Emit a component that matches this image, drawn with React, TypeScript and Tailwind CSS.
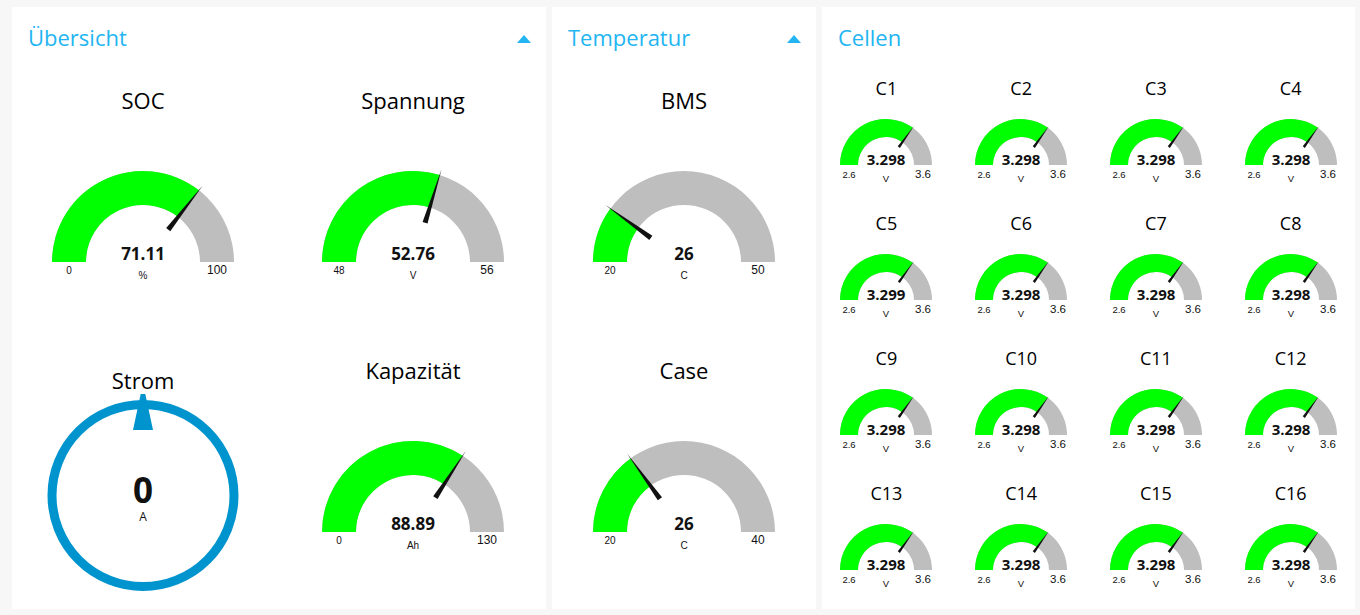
import React from 'react';

const GREEN = '#00ff00';
const GRAY = '#bebebe';
const BLUE = '#0094ce';

interface GaugeSpec {
  w: number;
  h: number;
  cy: number;
  ro: number;
  ri: number;
  top: number;
  bottom: number;
  half: number;
  valueSize: number;
  valueY: number;
  minSize: number;
  maxSize: number;
  labelY: number;
  labelOffset: number;
  unitSize: number;
  unitY: number;
}

const BIG: GaugeSpec = {
  w: 240, h: 130, cy: 105, ro: 91, ri: 57, top: 6, bottom: 16, half: 2.6,
  valueSize: 17, valueY: -2, minSize: 10, maxSize: 12, labelY: 12, labelOffset: 74, unitSize: 10, unitY: 17,
};

const SMALL: GaugeSpec = {
  w: 120, h: 70, cy: 52, ro: 46, ri: 28, top: 2, bottom: 6, half: 1.3,
  valueSize: 15, valueY: 0, minSize: 9.5, maxSize: 11.5, labelY: 13, labelOffset: 37, unitSize: 9.5, unitY: 17,
};

const arcPath = (cx: number, cy: number, ro: number, ri: number, f: number) => {
  const a = (1 - f) * Math.PI;
  const xo = cx + ro * Math.cos(a);
  const yo = cy - ro * Math.sin(a);
  const xi = cx + ri * Math.cos(a);
  const yi = cy - ri * Math.sin(a);
  return `M${cx - ro},${cy} A${ro},${ro} 0 0 1 ${xo},${yo} L${xi},${yi} A${ri},${ri} 0 0 0 ${cx - ri},${cy} Z`;
};

const needlePath = (cx: number, cy: number, s: GaugeSpec, f: number) => {
  const a = (1 - f) * Math.PI;
  const xc = cx + (s.ro + s.top) * Math.cos(a);
  const yc = cy - (s.ro + s.top) * Math.sin(a);
  const xz = cx + (s.ri - s.bottom) * Math.cos(a);
  const yz = cy - (s.ri - s.bottom) * Math.sin(a);
  const xa = xz + s.half * Math.sin(a);
  const ya = yz + s.half * Math.cos(a);
  const xb = xz - s.half * Math.sin(a);
  const yb = yz - s.half * Math.cos(a);
  return `M${xa},${ya} L${xb},${yb} L${xc},${yc} Z`;
};

interface GaugeProps {
  spec: GaugeSpec;
  value: string;
  min: number;
  max: number;
  unit: string;
}

const Gauge: React.FC<GaugeProps> = ({ spec, value, min, max, unit }) => {
  const cx = spec.w / 2;
  const cy = spec.cy;
  const f = Math.min(1, Math.max(0, (parseFloat(value) - min) / (max - min)));
  return (
    <svg width={spec.w} height={spec.h} viewBox={`0 0 ${spec.w} ${spec.h}`}>
      <path d={arcPath(cx, cy, spec.ro, spec.ri, 1)} fill={GRAY} />
      <path d={arcPath(cx, cy, spec.ro, spec.ri, f)} fill={GREEN} />
      <path d={needlePath(cx, cy, spec, f)} fill="#111111" />
      <text x={cx} y={cy + spec.valueY} textAnchor="middle" fontFamily="'Open Sans', sans-serif" fontWeight={700} fontSize={spec.valueSize} fill="#111111">
        {value}
      </text>
      <text x={cx - spec.labelOffset} y={cy + spec.labelY} textAnchor="middle" fontFamily="'Liberation Sans', Arial, sans-serif" fontSize={spec.minSize} fill="#111111">
        {min}
      </text>
      <text x={cx + spec.labelOffset} y={cy + spec.labelY} textAnchor="middle" fontFamily="'Liberation Sans', Arial, sans-serif" fontSize={spec.maxSize} fill="#111111">
        {max}
      </text>
      <text x={cx} y={cy + spec.unitY} textAnchor="middle" fontFamily="'Liberation Sans', Arial, sans-serif" fontSize={spec.unitSize} fill="#111111">
        {unit}
      </text>
    </svg>
  );
};

const GroupHeader: React.FC<{ title: string; caret?: boolean }> = ({ title, caret }) => (
  <div className="flex h-[62px] items-center justify-between pb-[3px] pl-[16px] pr-[15px]">
    <h2 className="text-[22px] leading-none text-[#22b5f1]">{title}</h2>
    {caret && (
      <svg width="14" height="8" viewBox="0 0 14 8" className="mt-[4px]">
        <polygon points="7,0 14,8 0,8" fill="#22b5f1" />
      </svg>
    )}
  </div>
);

const BigGauge: React.FC<{ title: string; value: string; min: number; max: number; unit: string }> = (props) => (
  <div className="flex h-[270px] flex-col items-center">
    <p className="pt-[18px] text-[22px] leading-[27px] text-black">{props.title}</p>
    <div className="mt-[43px]">
      <Gauge spec={BIG} value={props.value} min={props.min} max={props.max} unit={props.unit} />
    </div>
  </div>
);

const Compass: React.FC<{ title: string; value: string; unit: string }> = ({ title, value, unit }) => (
  <div className="flex h-[270px] flex-col items-center">
    <p className="pt-[28px] text-[22px] leading-[27px] text-black">{title}</p>
    <svg width="200" height="200" viewBox="0 0 200 200">
      <circle cx="100" cy="101.5" r="91" fill="none" stroke={BLUE} strokeWidth="9" />
      <polygon points="97.7,0 102.3,0 110,36 90,36" fill={BLUE} />
      <text x="100" y="109" textAnchor="middle" fontFamily="'Open Sans', sans-serif" fontWeight={700} fontSize="35" fill="#111111">
        {value}
      </text>
      <text x="100" y="127" textAnchor="middle" fontFamily="'Open Sans', sans-serif" fontSize="12" fill="#111111">
        {unit}
      </text>
    </svg>
  </div>
);

const cells = [
  '3.298', '3.298', '3.298', '3.298',
  '3.299', '3.298', '3.298', '3.298',
  '3.298', '3.298', '3.298', '3.298',
  '3.298', '3.298', '3.298', '3.298',
];

const App: React.FC = () => {
  return (
    <div className="min-h-[615px] w-full bg-[#f7f7f7] font-['Open_Sans',sans-serif]">
      <div className="flex gap-[6px] pl-[12px] pt-[7px]">
        {/* Übersicht */}
        <div className="h-[602px] w-[534px] bg-white">
          <GroupHeader title="Übersicht" caret />
          <div className="grid grid-cols-[262px_262px] gap-x-[8px]">
            <BigGauge title="SOC" value="71.11" min={0} max={100} unit="%" />
            <BigGauge title="Spannung" value="52.76" min={48} max={56} unit="V" />
            <Compass title="Strom" value="0" unit="A" />
            <BigGauge title="Kapazität" value="88.89" min={0} max={130} unit="Ah" />
          </div>
        </div>

        {/* Temperatur */}
        <div className="h-[602px] w-[264px] bg-white">
          <GroupHeader title="Temperatur" caret />
          <div className="flex flex-col">
            <BigGauge title="BMS" value="26" min={20} max={50} unit="C" />
            <BigGauge title="Case" value="26" min={20} max={40} unit="C" />
          </div>
        </div>

        {/* Cellen */}
        <div className="h-[602px] w-[533px] bg-white">
          <GroupHeader title="Cellen" />
          <div className="grid grid-cols-4 gap-x-[6px]">
            {cells.map((v, i) => (
              <div key={i} className="flex h-[135px] flex-col items-center">
                <p className="pt-[8px] text-[18px] leading-[22px] text-black">C{i + 1}</p>
                <div className="mt-[14px]">
                  <Gauge spec={SMALL} value={v} min={2.6} max={3.6} unit="V" />
                </div>
              </div>
            ))}
          </div>
        </div>
      </div>
    </div>
  );
};

export default App;
